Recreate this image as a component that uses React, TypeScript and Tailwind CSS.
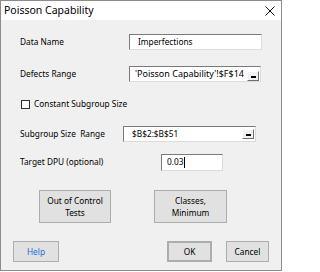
import React from "react";

const font = { fontFamily: '"Noto Sans", "Open Sans", sans-serif' };

function Field({ className, children }: { className: string; children: React.ReactNode }) {
  return (
    <div
      className={`relative flex items-center bg-white border border-t-[#7a7a7a] border-l-[#7a7a7a] border-r-[#dcdcdc] border-b-[#dcdcdc] ${className}`}
    >
      {children}
    </div>
  );
}

function RefButton({ className }: { className: string }) {
  return (
    <div
      className={`absolute right-[1px] w-[12px] h-[10px] bg-[#f0f0f0] border border-t-white border-l-white border-r-[#6d6d6d] border-b-[#6d6d6d] flex items-end justify-center pb-[2px] ${className}`}
    >
      <div className="w-[5px] h-[2px] bg-black" />
    </div>
  );
}

function Btn({ className, children }: { className: string; children: React.ReactNode }) {
  return (
    <div
      className={`flex items-center justify-center text-center leading-[12px] bg-[#e1e1e1] border border-[#adadad] text-[8.3px] ${className}`}
    >
      {children}
    </div>
  );
}

export default function App() {
  return (
    <div className="w-[285px] h-[272px] bg-white" style={font}>
      <div className="w-[282px] h-[271px] border border-[#8c8c8c] flex flex-col text-black">
        <div className="h-[19px] bg-white flex items-center justify-between pl-[3px] pr-[5px]">
          <span className="text-[10.5px]">Poisson Capability</span>
          <svg width="10" height="10" viewBox="0 0 10 10" className="mr-[1px]">
            <path d="M0.5 0.5 L9.5 9.5 M9.5 0.5 L0.5 9.5" stroke="#111" strokeWidth="1" />
          </svg>
        </div>
        <div className="flex-1 bg-[#f0f0f0] flex flex-col text-[8.3px]">
          <div className="mt-[14px] flex items-center h-[16px] pl-[19px]">
            <span className="w-[109px]">Data Name</span>
            <Field className="w-[133px] h-[16px] pl-[8px]">Imperfections</Field>
          </div>
          <div className="mt-[16px] flex items-center h-[16px] pl-[19px]">
            <span className="w-[109px]">Defects Range</span>
            <Field className="w-[132px] h-[16px] pl-[5px] text-[9px] whitespace-nowrap overflow-hidden">
              'Poisson Capability'!$F$14
              <RefButton className="bottom-[0px]" />
            </Field>
          </div>
          <div className="mt-[17px] flex items-center h-[10px] pl-[20px]">
            <div className="w-[9px] h-[9px] bg-white border border-[#333]" />
            <span className="ml-[4px]">Constant Subgroup Size</span>
          </div>
          <div className="mt-[17px] flex items-center h-[16px] pl-[19px]">
            <span className="w-[103px] whitespace-pre">Subgroup Size  Range</span>
            <Field className="w-[133px] h-[16px] pl-[8px]">
              $B$2:$B$51
              <RefButton className="top-[2px]" />
            </Field>
          </div>
          <div className="mt-[12px] flex items-center h-[17px] pl-[19px]">
            <span className="w-[141px]">Target DPU (optional)</span>
            <Field className="w-[62px] h-[17px] pl-[5px]">
              0.03
              <div className="w-[1px] h-[11px] bg-black ml-[1px]" />
            </Field>
          </div>
          <div className="mt-[19px] flex h-[33px]">
            <Btn className="ml-[38px] w-[72px] h-[33px]">
              Out of Control
              <br />
              Tests
            </Btn>
            <Btn className="ml-[43px] w-[73px] h-[33px]">
              Classes,
              <br />
              Minimum
            </Btn>
          </div>
          <div className="mt-[18px] flex h-[21px]">
            <Btn className="ml-[12px] w-[46px] h-[21px] text-[#1a6fd6]">Help</Btn>
            <Btn className="ml-[108px] w-[45px] h-[21px] border-2 border-[#3c3c3c]">OK</Btn>
            <Btn className="ml-[14px] w-[43px] h-[21px]">Cancel</Btn>
          </div>
        </div>
      </div>
    </div>
  );
}
